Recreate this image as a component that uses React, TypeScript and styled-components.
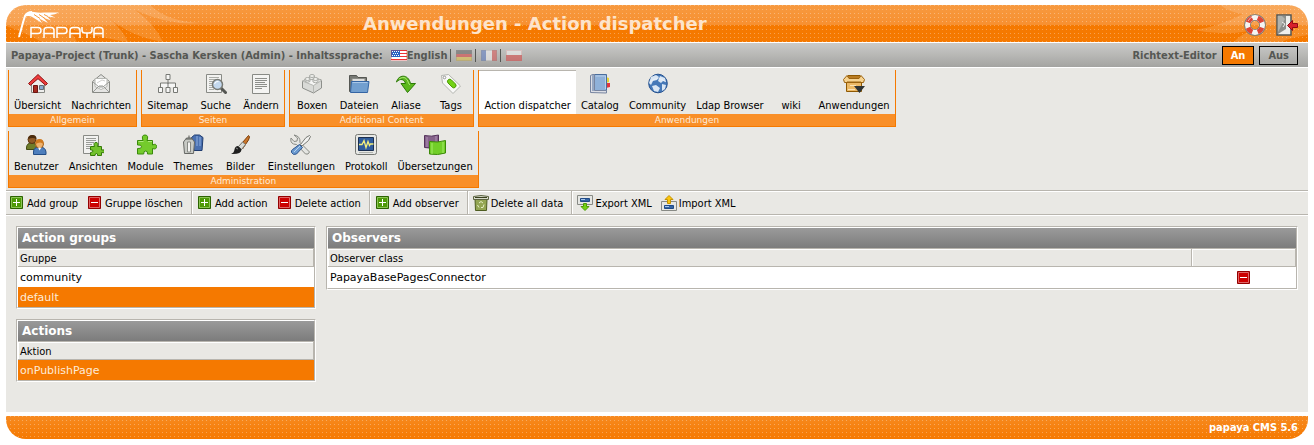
import React from 'react';
import styled, { createGlobalStyle, css } from 'styled-components';

const c = {
  orange: '#f57900',
  orangeLight: '#f98f28',
  panel: '#e9e8e4',
  line: '#b8b5ae',
  text: '#000',
  muted: '#555753',
};
const condensed = '"DejaVu Sans Condensed", "DejaVu Sans", Verdana, sans-serif';
const regular = '"DejaVu Sans", Verdana, sans-serif';

const GlobalStyle = createGlobalStyle`
  *, *::before, *::after { box-sizing: border-box; }
  body { margin: 0; background: #fff; color: ${c.text}; font: 11px/16px ${condensed}; }
  a { color: inherit; text-decoration: none; }
  button { font: inherit; color: inherit; border: 0; background: none; padding: 0; cursor: pointer; }
  svg { display: block; flex: none; }
  h1, h2 { margin: 0; }
`;

const dots = css`
  background-image: conic-gradient(from 0deg at 1px 1px, transparent 75%, rgba(255, 255, 255, 0.3) 0),
    var(--shade);
  background-size: 4px 4px, 100% 100%;
`;

const Page = styled.div`
  padding: 5px 6px;
`;

const Header = styled.header`
  --shade: linear-gradient(#f79a40 0, #f79030 53%, #f57900 53%);
  ${dots}
  position: relative;
  display: flex;
  align-items: center;
  height: 37px;
  border-radius: 20px 20px 0 0;
  overflow: hidden;
`;

const Leaves = styled.svg<{ $side: 'left' | 'right' }>`
  position: absolute;
  top: 0;
  ${(p) => p.$side}: 0;
`;

const Brand = styled.a`
  position: relative;
  flex: none;
  width: 357px;
  padding-left: 11px;
`;

const Title = styled.h1`
  position: relative;
  flex: 1;
  font: bold 18px/24px ${regular};
  color: #fde4cb;
`;

const HeaderTools = styled.nav`
  position: relative;
  display: flex;
  gap: 10px;
  padding: 3px 10px 0 0;
`;

const StatusBar = styled.div`
  display: flex;
  align-items: center;
  justify-content: space-between;
  height: 24px;
  margin: 1px 0;
  padding: 0 10px 0 5px;
  background: linear-gradient(#cbcbc9, #a4a4a1);
  color: ${c.muted};
  font-weight: bold;
`;

const StatusGroup = styled.div<{ $gap?: number }>`
  display: flex;
  align-items: center;
  gap: ${(p) => p.$gap ?? 0}px;
`;

const Label = styled.span`
  padding-top: 2px;
`;

const Languages = styled.nav`
  display: flex;
  align-items: center;
  margin-left: 8px;
`;

const Language = styled.a<{ $active?: boolean }>`
  display: flex;
  align-items: center;
  height: 13px;
  & + & {
    margin-left: 3px;
    padding-left: 5px;
    border-left: 1px solid ${c.muted};
  }
  svg { opacity: ${(p) => (p.$active ? 1 : 0.5)}; }
`;

const Toggle = styled.button<{ $on?: boolean }>`
  height: 19px;
  padding: 1px 8px 0;
  border: 1px solid #000;
  background: ${(p) => (p.$on ? c.orange : 'transparent')};
  color: ${(p) => (p.$on ? '#fff' : c.muted)};
`;

const Main = styled.main`
  background: ${c.panel};
`;

const Menu = styled.nav`
  display: flex;
  flex-wrap: wrap;
  gap: 4px;
  padding: 2px;
`;

const MenuGroup = styled.section`
  border: solid ${c.orange};
  border-width: 0 1px 1px;
`;

const MenuItems = styled.div`
  display: flex;
  height: 44px;
`;

const MenuItem = styled.a<{ $active?: boolean }>`
  display: flex;
  flex-direction: column;
  align-items: center;
  min-width: 45px;
  padding: 3px 5px 0;
  white-space: nowrap;
  ${(p) => p.$active && css`
    background: #fff;
    box-shadow: inset 0 1px ${c.line};
  `}
`;

const IconSlot = styled.span`
  flex: none;
  width: 22px;
  height: 25px;
`;

const MenuCaption = styled.div`
  height: 12px;
  background: ${c.orangeLight};
  color: #fdebd8;
  font: 9px/12px ${regular};
  text-align: center;
`;

const ToolBar = styled.div`
  display: flex;
  flex-wrap: wrap;
  padding-left: 3px;
  border: solid ${c.line};
  border-width: 1px 0;
  box-shadow: inset 0 1px #fff, 0 1px #fff;
`;

const ToolGroup = styled.div`
  display: flex;
  gap: 9px;
  height: 23px;
  padding-right: 8px;
  & + & {
    padding-left: 5px;
    border-left: 1px solid ${c.line};
    box-shadow: inset 1px 0 #fff;
  }
`;

const ToolButton = styled.button`
  display: flex;
  align-items: center;
  gap: 2px;
  white-space: nowrap;
`;

const Content = styled.div`
  display: grid;
  grid-template-columns: 300px minmax(0, 1fr);
  gap: 10px;
  align-items: start;
  min-height: 197px;
  padding: 11px 10px 10px;
`;

const Column = styled.div`
  display: grid;
  gap: 10px;
`;

const Panel = styled.section`
  border: 1px solid;
  border-color: ${c.line} #fff #fff ${c.line};
  background: #fff;
`;

const PanelInner = styled.div`
  border: 1px solid;
  border-color: #fff ${c.line} ${c.line} #fff;
`;

const PanelTitle = styled.h2`
  padding-left: 4px;
  background: linear-gradient(#9a9a9a, #7c7c7c);
  color: #fff;
  font: bold 12px/20px ${regular};
`;

const Table = styled.table`
  width: 100%;
  table-layout: fixed;
  border-collapse: separate;
  border-spacing: 0;
`;

const Th = styled.th<{ $width?: number }>`
  width: ${(p) => (p.$width ? `${p.$width}px` : 'auto')};
  height: 19px;
  padding: 3px 2px 0;
  border: 1px solid ${c.line};
  border-left: 0;
  background: ${c.panel};
  box-shadow: inset 0 1px #fff, inset 1px 0 #fff;
  font-weight: normal;
  line-height: 14px;
  text-align: left;
`;

const Row = styled.tr<{ $selected?: boolean }>`
  background: ${(p) => (p.$selected ? c.orange : '#fff')};
  color: ${(p) => (p.$selected ? '#fdebd8' : '#000')};
`;

const Td = styled.td<{ $center?: boolean }>`
  height: 20px;
  padding: ${(p) => (p.$center ? '0 2px' : '3px 2px 0')};
  font: 11px/16px ${regular};
  text-align: ${(p) => (p.$center ? 'center' : 'left')};
  vertical-align: top;
  button { display: inline-flex; align-items: center; height: 21px; vertical-align: top; }
`;

const Footer = styled.footer`
  --shade: linear-gradient(#f78a20, #f57900);
  ${dots}
  height: 23px;
  margin-top: 4px;
  padding-right: 10px;
  border-radius: 0 0 20px 20px;
  color: #fff;
  font-weight: bold;
  line-height: 24px;
  text-align: right;
`;

const Logo = () => (
  <svg width="90" height="32" viewBox="0 0 90 32" fill="none" stroke="#fff" role="img" aria-label="Papaya">
    <path d="M2 29C4 22 6 14 8 8q2-4 7-4" strokeWidth="2" />
    <path d="M7 9Q10 3 17 4q5 1 10 .5 8 0 15 0-4 2-9 2.500l5 2.500-8-1 4 4-8-3 5 5.500-9-4.500 3 4.500-9-5.500Q12 7 7 9z" fill="#fff" stroke="none" />
    <path d="M17 6.500l6 4M22 6.500l6 4M27 6.500l4 2" stroke="#f79a40" />
    <path d="M14 30v-10.500h7q3 0 3 3t-3 3h-7M27 30v-7.500q0-3 3-3h4q3 0 3 3v7.500M27 25.500h10M40 30v-10.500h7q3 0 3 3t-3 3h-7M53 30v-7.500q0-3 3-3h4q3 0 3 3v7.500M53 25.500h10M65 19v3q0 3 3 3h4q3 0 3-3v-3M70 25v5M77 30v-7.500q0-3 3-3h3q3 0 3 3v7.500M77 25.500h9" strokeWidth="1.500" />
  </svg>
);

const Flag = ({ kind }: { kind: 'us' | 'de' | 'fr' | 'pl' }) => (
  <svg width="16" height="11" viewBox="0 0 16 11" shapeRendering="crispEdges">
    {kind === 'us' && (
      <>
        <path fill="#fff" d="M0 0h16v11H0z" />
        <path stroke="#e33" d="M0 .5h16M0 3.500h16M0 6.500h16M0 9.500h16" />
        <path fill="#2b62c4" d="M0 0h9v7H0z" />
        <path stroke="#fff" strokeDasharray="1 1" d="M1 1.500h7M2 3.500h6M1 5.500h7" />
      </>
    )}
    {kind === 'de' && (
      <>
        <path fill="#555" d="M0 0h16v4H0z" />
        <path fill="#d33" d="M0 4h16v3H0z" />
        <path fill="#edc73c" d="M0 7h16v4H0z" />
      </>
    )}
    {kind === 'fr' && (
      <>
        <path fill="#5578c8" d="M0 0h5v11H0z" />
        <path fill="#fff" d="M5 0h6v11H5z" />
        <path fill="#e04a4a" d="M11 0h5v11h-5z" />
      </>
    )}
    {kind === 'pl' && (
      <>
        <path fill="#fff" d="M0 0h16v5H0z" />
        <path fill="#e03c3c" d="M0 5h16v6H0z" />
      </>
    )}
    <path fill="none" stroke={kind === 'us' || kind === 'pl' ? '#c33' : '#666'} strokeOpacity=".3" d="M.5.5h15v10H.5z" />
  </svg>
);

const LifeRing = () => (
  <svg width="22" height="22" viewBox="0 0 22 22" fill="none">
    <circle cx="11" cy="11" r="7.5" stroke="#777974" strokeWidth="6.600" />
    <circle cx="11" cy="11" r="7.5" stroke="#f4f4f2" strokeWidth="5" />
    <circle cx="11" cy="11" r="7.5" stroke="#dc4438" strokeWidth="5" pathLength="8" strokeDasharray="1.05 .95" strokeDashoffset="-.47" />
    <path d="M4 7q2-4 6-4.500" stroke="#fff" strokeOpacity=".6" />
  </svg>
);

const Logout = () => (
  <svg width="22" height="22" viewBox="0 0 22 22">
    <path d="M1 1h14v20H1z" fill="#eeeeec" stroke="#555753" strokeWidth="1.500" />
    <path d="M2 2h8v13l-8 5z" fill="#8c8e8a" />
    <path d="M2 2h4l3 3-7 13z" fill="#b0b2ae" />
    <path d="M6 8l3 2-2 3" fill="none" stroke="#eee" />
    <path d="M11.500 11.500l5-5v3h5v4h-5v3z" fill="#d8202c" stroke="#930a12" />
  </svg>
);

const icons: Record<string, React.ReactNode> = {
  home: (
    <>
      <path d="M4.500 11v8.500h13V11L11 5z" fill="#eeeeec" stroke="#888a85" />
      <path d="M6.500 12.500h4v7h-4z" fill="#a52a20" stroke="#6d1510" />
      <path d="M12.500 12.500h4v4h-4z" fill="#88a9cf" stroke="#646b75" />
      <path d="M11 1.500l9.500 9-1.800 1.800L11 5.700l-7.700 6.600-1.800-1.800z" fill="#ef3d3d" stroke="#8e1414" />
    </>
  ),
  mail: (
    <>
      <path d="M2.500 8.500L11 1.500l8.500 7v11h-17z" fill="#e5e5e3" stroke="#888a85" />
      <path d="M5 5.500h12v8l-6 3-6-3z" fill="#fff" stroke="#b5b7b2" />
      <path d="M3 19l6-6h4l6 6M3 9l6 5h4l6-5" fill="none" stroke="#999b97" />
      <path d="M7 10l5-3 3 1" stroke="#d0d0ce" fill="none" />
    </>
  ),
  sitemap: (
    <path d="M9 1.500h4v5H9zM11 7v4M3.500 14v-4h15v4M11 10v4M1.500 14.500h4v5h-4zM9 14.500h4v5H9zM16.500 14.500h4v5h-4z" fill="#f6f6f5" stroke="#777974" />
  ),
  search: (
    <>
      <path d="M1.500 1.500h15v18h-15z" fill="#f2f2f0" stroke="#888a85" />
      <path d="M4 4.500h10M4 6.500h10M4 8.500h5M4 10.500h4M4 12.500h4M4 14.500h5M4 16.500h5" stroke="#aaaca8" />
      <path d="M16 15l4.500 4.500" stroke="#555753" strokeWidth="3" strokeLinecap="round" />
      <circle cx="12.500" cy="11.500" r="5" fill="#c3d8ee" stroke="#777974" strokeWidth="1.500" />
      <path d="M9.500 11q1-3 4-2.500" stroke="#fff" fill="none" />
    </>
  ),
  page: (
    <>
      <path d="M2.500 1.500h17v19h-17z" fill="#f4f4f2" stroke="#888a85" />
      <path d="M5 5.500h12M5 7.500h12M5 9.500h10M5 11.500h12M5 13.500h12M5 15.500h7" stroke="#8d8f8b" />
    </>
  ),
  box: (
    <>
      <path d="M1.500 8l9-4 10 3v8l-8 5-11-5z" fill="#d9dad7" stroke="#8d8f8b" />
      <path d="M1.500 8l11 4.500 8-5-10-3.500z" fill="#f6f6f5" stroke="#b5b7b3" />
      <path d="M12.500 12.500v7" stroke="#b5b7b3" />
      <g fill="#eeefec" stroke="#a9aba7">
        <path d="M8.500 3v3q2.500 1.500 5 0V3M4 6v2.500q2.500 1.500 5 0V6M12 6v3q2.500 1.500 5 0V6" />
        <ellipse cx="11" cy="3" rx="2.500" ry="1.500" /><ellipse cx="6.500" cy="6" rx="2.500" ry="1.500" /><ellipse cx="14.500" cy="6" rx="2.500" ry="1.500" />
      </g>
    </>
  ),
  folder: (
    <>
      <path d="M1.500 18.500v-16h7l1.500 2h8.500v14z" fill="#777974" stroke="#555753" />
      <path d="M4 5.500h13v6H4z" fill="#dededc" stroke="#888a85" />
      <path d="M3.500 8.500h17.500l-1.500 11H2.500z" fill="#729fcf" stroke="#3465a4" />
      <path d="M4.500 9.500h15" stroke="#a9c7e8" />
    </>
  ),
  alias: (
    <>
      <path d="M1.500 9C3 2 13 0 15.500 10.500h5l-8 9-6.500-9h4.500C9.500 6 5 5 1.500 9z" fill="#5cb81e" stroke="#2d7a08" />
      <path d="M4 6q7-5 10 5l1 1" fill="none" stroke="#a8e472" />
    </>
  ),
  tag: (
    <>
      <path d="M1.500 2.500l7-1L20.500 13l-7.500 7.500L2.500 10z" fill="#f8f8f7" stroke="#b3b5b0" />
      <circle cx="4.500" cy="4.500" r="1.300" fill="#fff" stroke="#999" />
      <path d="M8.500 6.500q1.500-1 3 .5l4 4q1.500 2-.5 3.500-1.500 1-3-.5l-4-4q-1.500-2 .5-3.500z" fill="#73d216" stroke="#4e9a06" />
    </>
  ),
  catalog: (
    <>
      <path d="M17 4l3 1v4l-3 1z" fill="#e8d534" /><path d="M17 10h4v4l-4 1z" fill="#e2353c" />
      <path d="M3.500 1.500h14v16h-14z" fill="#8fb1d9" stroke="#4a6d9c" />
      <path d="M1.500 19.500v-17l2-1h2v16h12v2.500z" fill="#dcdee5" stroke="#7785a0" />
      <path d="M4 2v16" stroke="#5272a0" /><path d="M6.500 3h10v13" fill="none" stroke="#b9d0ec" />
    </>
  ),
  globe: (
    <>
      <circle cx="11" cy="10.500" r="9.300" fill="#4478b8" stroke="#24508e" />
      <path d="M4 4l5-2 3 2-2 3-4 1-2 4-2-2zM13 3l5 2 1 4-3-1-2 2-3-2zM5 13l4-1 4 3-2 4-4-1zM15 11l4 1-1 4-3 2z" fill="#d9e6f4" />
      <path d="M3 9q8-7 16 0" fill="none" stroke="#fff" strokeOpacity=".4" />
    </>
  ),
  package: (
    <>
      <path d="M3.500 8.500h15v10h-15z" fill="#ecb966" stroke="#8f5902" />
      <path d="M5 2.500h12l2 4H3z" fill="#b97c22" stroke="#8f5902" />
      <path d="M.5 6.500L4 2.500l2 3h10l2-3 3.500 4-1 3h-19z" fill="#f6d391" stroke="#9c6410" />
      <path d="M4 9h14" stroke="#9c6410" /><path d="M7 12.500h6M5 16.500h7" stroke="#fbe3b4" />
      <path d="M11 13h11l-5.500 7z" fill="#2e3436" />
    </>
  ),
  users: (
    <>
      <path d="M1.500 14q0-5 5-5t6 5v1.500h-11z" fill="#6f7d2a" stroke="#424b12" />
      <circle cx="7" cy="5.500" r="4" fill="#8f5b28" stroke="#5a3410" /><path d="M3.500 5q0-4 4-4t4 4q-4-2-8 0z" fill="#4b2b0c" />
      <path d="M8.500 20.500V18q0-5 6-5t6.500 5v2.500z" fill="#4e7fbd" stroke="#234d85" />
      <circle cx="14.500" cy="10" r="4" fill="#efb26d" stroke="#a15f19" /><path d="M10.500 10q-.5-5 4-5t4 5q-3-3-8 0z" fill="#d07a1e" />
      <path d="M13 13.500l1.500 3 2-3z" fill="#fff" />
    </>
  ),
  views: (
    <>
      <path d="M1.500 1.500h15v18h-15z" fill="#f2f2f0" stroke="#888a85" />
      <path d="M4 4.500h10M4 6.500h10M4 8.500h8M4 10.500h6M4 12.500h4M4 14.500h4" stroke="#999b97" />
      <path d="M8.500 12.500h4q-1.500-4 1.500-4t1.500 4h4v3.500q3-1 3 1.300t-3 1.200v3h-4q.5-2-1-2t-1.500 2h-4.500v-3q2.500 0 2.500-1.500T8.500 16z" fill="#73c22c" stroke="#367b08" />
    </>
  ),
  module: (
    <>
      <path d="M2.500 6.500h5.500q-2-5.500 2-5.500t2 5.500h5.500v4.500q4-2 4 1.500t-4 2v5.500h-5q.5-3-1.800-3t-2 3H2.500v-5.500q4 .5 4-1.800t-4-1.700z" fill="#74cb2c" stroke="#3a8a0a" />
      <path d="M3.500 7.500h5M13 7.500h4" stroke="#b0e87f" />
    </>
  ),
  themes: (
    <>
      <path d="M9.500 3.500l3-2.500h5l3.500 2.500-1 13h-8z" fill="#4a70b0" stroke="#1f3c70" />
      <path d="M15 2v10M18 3v9" stroke="#8fb0e0" />
      <path d="M1.500 8l3-4h5l3 4-1 11.500h-9z" fill="#c8cac5" stroke="#666864" />
      <path d="M5.500 8h3v10h-3z" fill="#f4f4f2" stroke="#888a85" /><path d="M4 5h6M7 4V1.500" stroke="#555753" />
    </>
  ),
  brush: (
    <>
      <path d="M19.500 1.500q2 .5 0 4.500l-6 9-3-3z" fill="#c9762b" stroke="#7d3f0a" />
      <path d="M13.500 8l3 2.500-4 5-3-3z" fill="#d9dbd7" stroke="#777974" />
      <path d="M2 20q3-1 3.500-4.500T9 12l3.500 3.500q0 5-10.500 4.500z" fill="#1f1f1f" />
      <path d="M7 14l2 1" stroke="#888" />
    </>
  ),
  tools: (
    <>
      <path d="M4 1l3.500 3-.5 3-3 .5L1 4q-1 4.500 2.500 6l3 .5 9 9.500q3 1 4-2L10 8.500Q10.500 2 4 1z" fill="#e4e5e2" stroke="#888a85" />
      <path d="M19.500 1.500l1 1-2 4L12 12l-1.500-1.500 5.500-7z" fill="#f2f2f0" stroke="#777974" />
      <path d="M9.500 10.500l3 3-6 6.500q-3.500 1.500-5-1.500-.5-2 1-3z" fill="#6c9bd0" stroke="#2c5590" />
      <path d="M4 18l6-6" stroke="#b9d3f0" />
    </>
  ),
  monitor: (
    <>
      <rect x=".5" y=".5" width="21" height="20" rx="2" fill="#e6e7e4" stroke="#777974" />
      <path d="M3.500 3.500h15v13h-15z" fill="#2f5c9c" stroke="#1b2f50" />
      <path d="M4 10.500h3l2-4 2 7 2-6 1.500 4 1-1.500h3" fill="none" stroke="#f3ee7c" strokeWidth="1.300" />
      <path d="M4 18.500h14" stroke="#b3b5b0" />
    </>
  ),
  translations: (
    <>
      <path d="M.5 1.500q7 1.500 14-.5v12q-7 2-14 .5z" fill="#85628a" stroke="#54325a" />
      <path d="M3 3v10M12 2v10" stroke="#b192b5" />
      <path d="M5.500 7.500q8 1.500 16-1v12.500q-8 2.500-16 1z" fill="#72ce28" stroke="#3c8a08" />
      <path d="M8 9v11M19 8v11" stroke="#a5ec68" />
    </>
  ),
};

const Icon = ({ name }: { name?: string }) => (
  <IconSlot>
    {name && <svg width="22" height="22" viewBox="0 0 22 22" fill="none">{icons[name]}</svg>}
  </IconSlot>
);

const SmallIcon = ({ kind }: { kind: string }) => (
  <svg width="16" height="16" viewBox="0 0 16 16" fill="none" aria-hidden="true">
    {kind === 'add' && (
      <>
        <path d="M1.500 1.500h12v12h-12z" fill="#4e9a06" stroke="#2c6301" />
        <path d="M2.500 2.500h10v10h-10z" stroke="#8cc456" /><path d="M4 7.500h7M7.500 4v7" stroke="#fff" />
      </>
    )}
    {kind === 'delete' && (
      <>
        <path d="M1.500 1.500h12v12h-12z" fill="#c00" stroke="#930000" />
        <path d="M2.500 2.500h10v10h-10z" stroke="#e06666" /><path d="M4 7.500h7" stroke="#fff" />
      </>
    )}
    {kind === 'trash' && (
      <>
        <path d="M2 4h12l-.5 11.500h-11z" fill="#93a552" stroke="#4e5c20" />
        <path d="M.5 1.500q7.500-2 15 0v3H.5z" fill="#d5d8c8" stroke="#5c6340" /><path d="M2 2.500h12" stroke="#39401f" />
        <path d="M6 8l2-1.500L10 8M11 9.500l-1 3H8M6 12.500L4.500 10" stroke="#e6edc5" />
      </>
    )}
    {kind === 'export' && (
      <>
        <path d="M.5.500h15v9H.5z" fill="#e6e7e4" stroke="#888a85" />
        <path d="M3.500 3.500h9v3h-9z" fill="#3465a4" stroke="#204a87" /><path d="M4 4.500h4" stroke="#a8c6ec" />
        <path d="M6.500 8.500h3v3h2.500l-4 4-4-4h2.500z" fill="#73d216" stroke="#4e9a06" />
      </>
    )}
    {kind === 'import' && (
      <>
        <path d="M.5 6.500h15v9H.5z" fill="#e6e7e4" stroke="#888a85" />
        <path d="M3.500 10.500h9v3h-9z" fill="#3465a4" stroke="#204a87" /><path d="M4 11.500h4" stroke="#a8c6ec" />
        <path d="M6.500 8.500h3v-4H12l-4-4-4 4h2.500z" fill="#fcc50a" stroke="#c49100" />
      </>
    )}
  </svg>
);

type Item = { label: string; icon?: string; active?: boolean };
const menu: { caption: string; items: Item[] }[] = [
  { caption: 'Allgemein', items: [{ label: 'Übersicht', icon: 'home' }, { label: 'Nachrichten', icon: 'mail' }] },
  { caption: 'Seiten', items: [{ label: 'Sitemap', icon: 'sitemap' }, { label: 'Suche', icon: 'search' }, { label: 'Ändern', icon: 'page' }] },
  {
    caption: 'Additional Content',
    items: [{ label: 'Boxen', icon: 'box' }, { label: 'Dateien', icon: 'folder' }, { label: 'Aliase', icon: 'alias' }, { label: 'Tags', icon: 'tag' }],
  },
  {
    caption: 'Anwendungen',
    items: [
      { label: 'Action dispatcher', active: true }, { label: 'Catalog', icon: 'catalog' }, { label: 'Community', icon: 'globe' },
      { label: 'Ldap Browser' }, { label: 'wiki' }, { label: 'Anwendungen', icon: 'package' },
    ],
  },
  {
    caption: 'Administration',
    items: [
      { label: 'Benutzer', icon: 'users' }, { label: 'Ansichten', icon: 'views' }, { label: 'Module', icon: 'module' },
      { label: 'Themes', icon: 'themes' }, { label: 'Bilder', icon: 'brush' }, { label: 'Einstellungen', icon: 'tools' },
      { label: 'Protokoll', icon: 'monitor' }, { label: 'Übersetzungen', icon: 'translations' },
    ],
  },
];

const tools: [string, string][][] = [
  [['add', 'Add group'], ['delete', 'Gruppe löschen']],
  [['add', 'Add action'], ['delete', 'Delete action']],
  [['add', 'Add observer']],
  [['trash', 'Delete all data']],
  [['export', 'Export XML'], ['import', 'Import XML']],
];

const ListPanel = ({ title, column, rows, selected }: { title: string; column: string; rows: string[]; selected: string }) => (
  <Panel>
    <PanelInner>
      <PanelTitle>{title}</PanelTitle>
      <Table>
        <thead><tr><Th>{column}</Th></tr></thead>
        <tbody>
          {rows.map((row) => (
            <Row key={row} $selected={row === selected}><Td><a href="#">{row}</a></Td></Row>
          ))}
        </tbody>
      </Table>
    </PanelInner>
  </Panel>
);

export default function App() {
  return (
    <Page>
      <GlobalStyle />
      <Header>
        <Leaves $side="left" width="210" height="37" viewBox="0 0 210 37" fill="#fff" fillOpacity=".15" aria-hidden="true">
          <path d="M0 0h144q18 17 52 18-33 3-67-13 20 14 28 32-35-6-56-26 16 14 21 26Q78 30 54 20q13 7 17 17H36Q18 27 0 21z" />
        </Leaves>
        <Leaves $side="right" width="120" height="37" viewBox="0 0 120 37" fill="#fff" fillOpacity=".15" aria-hidden="true">
          <path d="M120 0H32q9 7 23 9Q30 22 6 25q28 6 55 1-11 6-15 11h48q6-4 26-7z" />
        </Leaves>
        <Brand href="#"><Logo /></Brand>
        <Title>Anwendungen - Action dispatcher</Title>
        <HeaderTools>
          <a href="#" aria-label="Hilfe"><LifeRing /></a>
          <a href="#" aria-label="Abmelden"><Logout /></a>
        </HeaderTools>
      </Header>
      <StatusBar>
        <StatusGroup>
          <Label>Papaya-Project (Trunk) - Sascha Kersken (Admin) - Inhaltssprache:</Label>
          <Languages>
            <Language href="#" $active><Flag kind="us" /><Label>English</Label></Language>
            <Language href="#" aria-label="Deutsch"><Flag kind="de" /></Language>
            <Language href="#" aria-label="Français"><Flag kind="fr" /></Language>
            <Language href="#" aria-label="Polski"><Flag kind="pl" /></Language>
          </Languages>
        </StatusGroup>
        <StatusGroup $gap={5}>
          <Label>Richtext-Editor</Label>
          <Toggle $on>An</Toggle>
          <Toggle>Aus</Toggle>
        </StatusGroup>
      </StatusBar>
      <Main>
        <Menu>
          {menu.map((group) => (
            <MenuGroup key={group.caption}>
              <MenuItems>
                {group.items.map((item) => (
                  <MenuItem key={item.label} href="#" $active={item.active}>
                    <Icon name={item.icon} />
                    {item.label}
                  </MenuItem>
                ))}
              </MenuItems>
              <MenuCaption>{group.caption}</MenuCaption>
            </MenuGroup>
          ))}
        </Menu>
        <ToolBar>
          {tools.map((group) => (
            <ToolGroup key={group[0][1]}>
              {group.map(([kind, label]) => (
                <ToolButton key={label}><SmallIcon kind={kind} /><Label>{label}</Label></ToolButton>
              ))}
            </ToolGroup>
          ))}
        </ToolBar>
        <Content>
          <Column>
            <ListPanel title="Action groups" column="Gruppe" rows={['community', 'default']} selected="default" />
            <ListPanel title="Actions" column="Aktion" rows={['onPublishPage']} selected="onPublishPage" />
          </Column>
          <Panel>
            <PanelInner>
              <PanelTitle>Observers</PanelTitle>
              <Table>
                <thead><tr><Th>Observer class</Th><Th $width={104} aria-label="Aktion" /></tr></thead>
                <tbody>
                  <Row>
                    <Td>PapayaBasePagesConnector</Td>
                    <Td $center><button aria-label="Löschen"><SmallIcon kind="delete" /></button></Td>
                  </Row>
                </tbody>
              </Table>
            </PanelInner>
          </Panel>
        </Content>
      </Main>
      <Footer>papaya CMS 5.6</Footer>
    </Page>
  );
}
